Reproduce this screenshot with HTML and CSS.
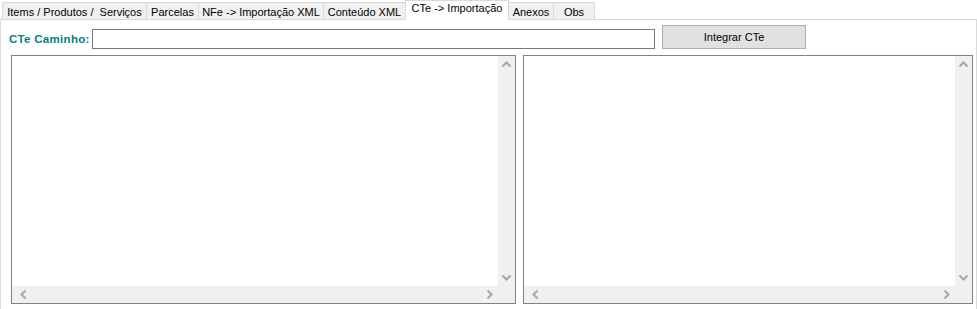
FILE: index.html
```html
<!DOCTYPE html>
<html lang="pt-BR">
    <head>
        <meta charset="UTF-8">
        <meta name="viewport" content="width=device-width, initial-scale=1.0">
        <title>CTe -> Importação</title>
        <link rel="stylesheet" href="styles.css">
    </head>

    <body>
        <div class="tabs">
            <div class="tab tab-items">Items / Produtos /&nbsp; Serviços</div>
            <div class="tab tab-parcelas">Parcelas</div>
            <div class="tab tab-nfe">NFe -&gt; Importação XML</div>
            <div class="tab tab-conteudo">Conteúdo XML</div>
            <div class="tab tab-cte active">CTe -&gt; Importação</div>
            <div class="tab tab-anexos">Anexos</div>
            <div class="tab tab-obs">Obs</div>
        </div>

        <div class="panel">
            <div class="path-row">
                <label for="ctePath">CTe Caminho:</label>
                <input type="text" id="ctePath">
                <button type="button" class="integrate-button">Integrar CTe</button>
            </div>

            <div class="memo-row">
                <div class="memo memo-left">
                    <div class="memo-body"></div>
                    <div class="vscroll">
                        <svg width="17" height="17" viewBox="0 0 17 17"><path d="M4.5 10.5 L8.5 6.5 L12.5 10.5" fill="none" stroke="#a6a6a6" stroke-width="2"/></svg>
                        <svg width="17" height="17" viewBox="0 0 17 17"><path d="M4.5 6.5 L8.5 10.5 L12.5 6.5" fill="none" stroke="#a6a6a6" stroke-width="2"/></svg>
                    </div>
                    <div class="hscroll">
                        <svg width="17" height="17" viewBox="0 0 17 17"><path d="M10.5 4.5 L6.5 8.5 L10.5 12.5" fill="none" stroke="#a6a6a6" stroke-width="2"/></svg>
                        <svg width="17" height="17" viewBox="0 0 17 17"><path d="M6.5 4.5 L10.5 8.5 L6.5 12.5" fill="none" stroke="#a6a6a6" stroke-width="2"/></svg>
                    </div>
                    <div class="corner"></div>
                </div>

                <div class="memo memo-right">
                    <div class="memo-body"></div>
                    <div class="vscroll">
                        <svg width="17" height="17" viewBox="0 0 17 17"><path d="M4.5 10.5 L8.5 6.5 L12.5 10.5" fill="none" stroke="#a6a6a6" stroke-width="2"/></svg>
                        <svg width="17" height="17" viewBox="0 0 17 17"><path d="M4.5 6.5 L8.5 10.5 L12.5 6.5" fill="none" stroke="#a6a6a6" stroke-width="2"/></svg>
                    </div>
                    <div class="hscroll">
                        <svg width="17" height="17" viewBox="0 0 17 17"><path d="M10.5 4.5 L6.5 8.5 L10.5 12.5" fill="none" stroke="#a6a6a6" stroke-width="2"/></svg>
                        <svg width="17" height="17" viewBox="0 0 17 17"><path d="M6.5 4.5 L10.5 8.5 L6.5 12.5" fill="none" stroke="#a6a6a6" stroke-width="2"/></svg>
                    </div>
                    <div class="corner"></div>
                </div>
            </div>
        </div>
    </body>
</html>
```

FILE: styles.css
```css
* {
    box-sizing: border-box;
    margin: 0;
    padding: 0;
    font-family: "Liberation Sans", Arial, sans-serif;
}
body {
    background-color: #fff;
    font-size: 11px;
    color: #000;
    overflow: hidden;
}
.tabs {
    display: flex;
    align-items: flex-end;
    padding-left: 2px;
}
.tab {
    height: 17px;
    line-height: 17px;
    padding-top: 1px;
    text-align: center;
    white-space: nowrap;
    background-color: #f0f0f0;
    border: 1px solid #d9d9d9;
    border-bottom: none;
    margin-left: -1px;
}
.tab:first-child {
    margin-left: 0;
}
.tab.active {
    height: 20px;
    line-height: 14px;
    padding-top: 0;
    background-color: #fff;
    margin-bottom: -1px;
    position: relative;
    z-index: 1;
}
.tab-items { width: 145px; }
.tab-parcelas { width: 53px; }
.tab-nfe { width: 126px; }
.tab-conteudo { width: 83px; }
.tab-cte { width: 104px; }
.tab-anexos { width: 46px; }
.tab-obs { width: 42px; }
.panel {
    width: 977px;
    height: 300px;
    border: 1px solid #d9d9d9;
    padding: 5px 3px 0 10px;
}
.path-row {
    display: flex;
    align-items: flex-end;
    height: 24px;
}
.path-row label {
    color: #007f7f;
    font-weight: bold;
    font-size: 11.5px;
    letter-spacing: 0.3px;
    margin-left: -2px;
    width: 83px;
    padding-bottom: 4px;
}
.path-row input {
    width: 563px;
    height: 20px;
    border: 1px solid #7a7a7a;
    font-size: 11px;
    padding: 0 3px;
}
.integrate-button {
    width: 144px;
    height: 24px;
    margin-left: 7px;
    background-color: #e1e1e1;
    border: 1px solid #adadad;
    font-size: 11px;
    color: #000;
}
.memo-row {
    display: flex;
    gap: 7px;
    margin-top: 6px;
}
.memo {
    height: 249px;
    border: 1px solid #828282;
    display: grid;
    grid-template-columns: 1fr 17px;
    grid-template-rows: 1fr 17px;
}
.memo-left {
    width: 505px;
}
.memo-right {
    width: 450px;
}
.memo-body {
    background-color: #fff;
}
.vscroll {
    background-color: #f0f0f0;
    display: flex;
    flex-direction: column;
    justify-content: space-between;
}
.hscroll {
    background-color: #f0f0f0;
    display: flex;
    justify-content: space-between;
    padding-left: 3px;
}
.corner {
    background-color: #f0f0f0;
}
.vscroll svg, .hscroll svg {
    display: block;
}
```
